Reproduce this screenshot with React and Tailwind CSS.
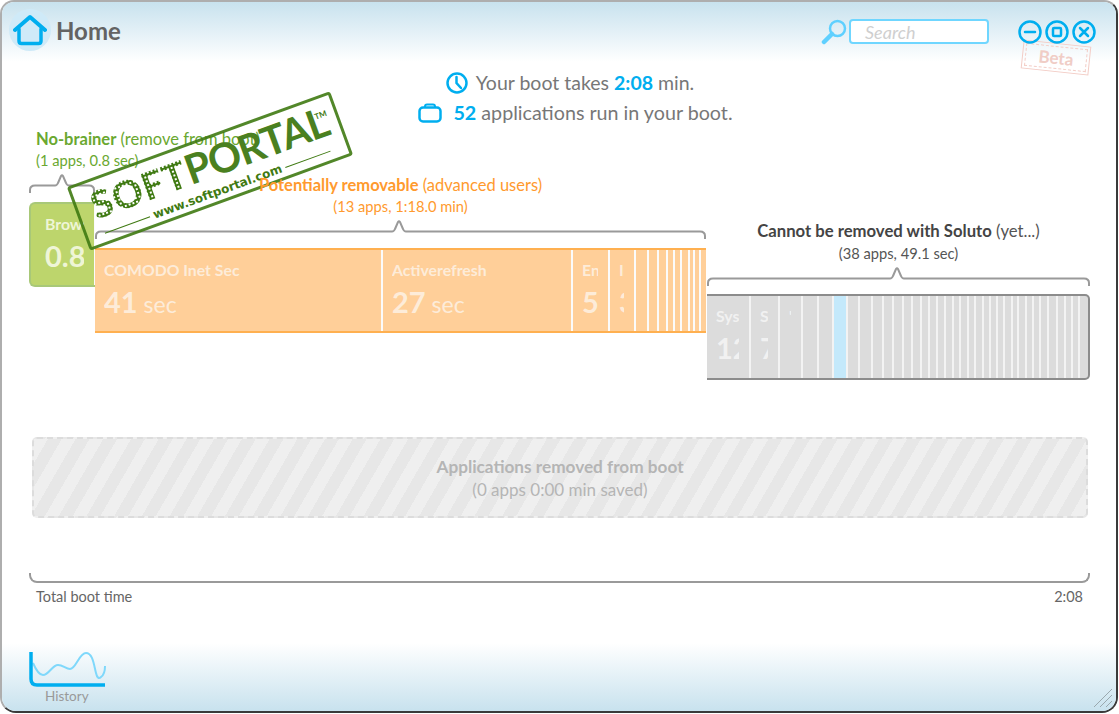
const orange = [
  { w: 288, n: "COMODO Inet Sec", v: "41", u: " sec" },
  { w: 190, n: "Activerefresh", v: "27", u: " sec" },
  { w: 37, n: "EngineX", v: "5", u: " sec" },
  { w: 26, n: "Imp", v: "3", u: " sec" },
  { w: 13 }, { w: 10 }, { w: 9 }, { w: 7 }, { w: 7 }, { w: 8 }, { w: 5 }, { w: 6 }, { w: 5, last: true },
];
const grayWidths = [13, 11, 10, 10, 9, 9, 8, 8, 8, 8, 7, 8, 7, 8, 7, 7, 7, 8, 6, 8, 7, 7, 8, 9, 8, 7, 7];
const gray = [
  { w: 44, n: "System", v: "12", u: " sec" },
  { w: 29, n: "Svc", v: "7", u: " sec" },
  { w: 23, n: "'''" },
  { w: 16 },
  { w: 15 },
  { w: 14, blue: true },
  { w: 12 },
  ...grayWidths.map((w) => ({ w })),
  { w: 8, last: true },
];

function Segment({ s, tone, sep = "border-[#fbfbfb]" }) {
  return (
    <div
      className={`h-full shrink-0 overflow-hidden border-r-2 ${sep} ${s.blue ? "bg-[#c4e9fb]" : ""}`}
      style={{ width: s.w, borderRightWidth: s.last ? 0 : undefined }}
    >
      {s.n && (
        <div className="h-full pl-[9px] pr-[10px] pt-[10px]">
          <div className={`overflow-hidden whitespace-nowrap text-[15.800px] leading-5 font-bold ${tone}`}>{s.n}</div>
          {s.v && (
            <div className={`mt-[5px] overflow-hidden whitespace-nowrap text-[29px] leading-[34px] font-bold ${tone}`}>
              {s.v}
              <span className="text-[23px] font-normal">{s.u}</span>
            </div>
          )}
        </div>
      )}
    </div>
  );
}

function Bracket({ w, ax }) {
  return (
    <svg width={w} height="21" className="block" fill="none" stroke="#9a9a9a" strokeWidth="2">
      <path d={`M1 20 V17 Q1 12.500 6 12.500 H${ax - 7} Q${ax - 5} 12.500 ${ax - 4} 10 L${ax - 1} 3 Q${ax} 1.500 ${ax + 1} 3 L${ax + 4} 10 Q${ax + 5} 12.500 ${ax + 7} 12.500 H${w - 6} Q${w - 1} 12.500 ${w - 1} 17 V20`} />
    </svg>
  );
}

function WinButton({ children }) {
  return (
    <svg width="24" height="24" viewBox="0 0 24 24" fill="none" stroke="#00aeef" strokeWidth="2.500" strokeLinecap="round">
      <circle cx="12" cy="12" r="10.500" />
      {children}
    </svg>
  );
}

function Stamp() {
  return (
    <div className="pointer-events-none absolute left-[70px] top-[137px] z-10 h-[68px] w-[280px] -rotate-[20deg] rounded-[3px] border-[3px] border-[#3f7a12]/90">
      <div className="absolute left-[14px] top-[3px] flex items-baseline">
        <span className="bg-[radial-gradient(circle,#3f7a12_1.700px,transparent_1.800px)] bg-[length:4px_4px] bg-clip-text text-[38px] leading-[40px] font-black tracking-[1px] text-transparent">
          SOFT
        </span>
        <span className="text-[41px] leading-[40px] font-bold tracking-[-1px] text-[#4a8020]">PORTAL</span>
        <span className="absolute left-[240px] top-[8px] text-[8px] leading-[10px] font-bold text-[#3f7a12]">TM</span>
      </div>
      <div className="absolute left-[17px] top-[45px] flex w-[240px] items-center gap-[4px]">
        <div className="h-px flex-1 bg-[#3f7a12]" />
        <span className="whitespace-nowrap font-['DejaVu_Sans','Lato',sans-serif] text-[12px] leading-4 font-bold text-[#3f7a12]">
          www.softportal.com
        </span>
        <div className="h-px flex-1 bg-[#3f7a12]" />
      </div>
    </div>
  );
}

export default function App() {
  return (
    <div className="h-[714px] w-[1119px] overflow-hidden bg-white pb-[1px] pr-[1px] font-['Lato','Open_Sans',sans-serif]">
      <div className="relative flex h-full w-full flex-col overflow-hidden rounded-t-[14px] rounded-b-[16px] border-y-2 border-x-2 border-t-[#aeaeae] border-l-[#aeaeae] border-r-[#3a3a3a] border-b-[#3a3a3a] bg-white">
        <header className="flex h-[60px] shrink-0 items-start bg-gradient-to-b from-[#c8e2ee] to-white">
          <div className="ml-[7px] mt-[7px] flex h-[42px] w-[42px] items-center justify-center rounded-full bg-[#cfeaf8]">
            <svg width="34" height="32" viewBox="0 0 34 32" fill="none" stroke="#00aeef" strokeLinejoin="round" strokeLinecap="round">
              <path d="M2 16 L17 3 L32 16" strokeWidth="4" />
              <path d="M6 15 V27 Q6 29.500 8.500 29.500 H25.500 Q28 29.500 28 27 V15" strokeWidth="3.500" />
            </svg>
          </div>
          <div className="ml-[5px] mt-[12px] text-[24px] leading-[34px] font-bold text-[#636363]">Home</div>
          <div className="ml-auto mt-[17px] flex items-start">
            <svg width="26" height="26" viewBox="0 0 26 26" fill="none" className="mr-[2px]" strokeLinecap="round">
              <circle cx="16.500" cy="9.500" r="7.500" stroke="#5fd0ff" strokeWidth="2.500" />
              <path d="M11 15 L3 23" stroke="#5fd0ff" strokeWidth="4.500" />
            </svg>
            <div className="flex h-[25px] w-[140px] items-center rounded-[4px] border-2 border-[#6fd6ff] bg-white pl-[14px] text-[18px] leading-5 italic text-[#cfcfcf]">
              Search
            </div>
          </div>
          <div className="relative ml-[29px] mr-[20px] mt-[18px] flex gap-[3px]">
            <div className="absolute left-[7px] top-[26px] flex h-[23px] w-[62px] rotate-[6deg] items-center justify-center border border-dashed border-[#f3cdc6] outline outline-1 outline-offset-[2px] outline-[#f3cdc6]">
              <span className="text-[17px] leading-5 font-bold text-[#f0cdc6]">Beta</span>
            </div>
            <div className="relative flex gap-[3px]">
              <WinButton><path d="M7 12 H17" /></WinButton>
              <WinButton><rect x="8" y="8" width="8" height="8" rx="1" /></WinButton>
              <WinButton><path d="M8 8 L16 16 M16 8 L8 16" /></WinButton>
            </div>
          </div>
        </header>

        <section className="mt-[6px] flex shrink-0 flex-col items-center pl-[22px] text-[19.500px] leading-[30px] text-[#777777]">
          <div className="flex items-center">
            <svg width="22" height="22" viewBox="0 0 22 22" fill="none" stroke="#00aeef" strokeWidth="2.500" strokeLinecap="round" className="mr-[8px]">
              <circle cx="11" cy="11" r="9.500" />
              <path d="M10.500 5 V11 L15 16" />
            </svg>
            <span>Your boot takes <b className="font-bold text-[#00aeef]">2:08</b> min.</span>
          </div>
          <div className="ml-[11px] flex items-center text-[19.700px]">
            <svg width="24" height="20" viewBox="0 0 24 20" fill="none" stroke="#00aeef" strokeWidth="2.500" className="mr-[11px]">
              <rect x="1.500" y="4.500" width="21" height="14" rx="3.500" />
              <path d="M7 4.500 V3.500 Q7 1.500 9 1.500 H15 Q17 1.500 17 3.500 V4.500" strokeWidth="2" />
            </svg>
            <span><b className="font-bold text-[#00aeef]">52</b> applications run in your boot.</span>
          </div>
        </section>

        <section className="flex shrink-0 items-start pl-[27px]">
          <div className="relative mt-[1px] w-[66px] shrink-0">
            <div className="ml-[7px] whitespace-nowrap text-[16.500px] leading-5 text-[#6aa830]">
              <b className="font-bold">No-brainer</b> (remove from boot)
            </div>
            <div className="ml-[7px] mt-px whitespace-nowrap text-[14.700px] leading-5 text-[#6aa830]">(1 apps, 0.8 sec)</div>
            <div className="mt-[3px]"><Bracket w={66} ax={33} /></div>
            <div className="mt-[8px] h-[85px] overflow-hidden rounded-l-[6px] border-y-2 border-l-2 border-[#a8c878] bg-[#bdd56c] pl-[5px]">
              <Segment s={{ w: 60, n: "Browser", v: "0.8", u: " sec" }} tone="text-[#eff5d6]" />
            </div>
          </div>

          <div className="mt-[47px] w-[611px] shrink-0">
            <div className="relative z-20 whitespace-nowrap text-center text-[16.500px] leading-5 text-[#ff9a2e]">
              <b className="font-bold">Potentially removable</b> (advanced users)
            </div>
            <div className="relative z-20 mt-px text-center text-[14.700px] leading-5 text-[#ff9a2e]">(13 apps, 1:18.0 min)</div>
            <div className="mt-[3px]"><Bracket w={611} ax={304} /></div>
            <div className="mt-[8px] flex h-[85px] overflow-hidden border-y-2 border-[#ffb050] bg-[#ffcf99]">
              {orange.map((s, i) => <Segment key={i} s={s} tone="text-[#fdecd9]" />)}
            </div>
          </div>

          <div className="ml-px mt-[93px] w-[383px] shrink-0">
            <div className="whitespace-nowrap text-center text-[16.700px] leading-5 text-[#555555]">
              <b className="font-bold text-[#444444]">Cannot be removed with Soluto</b> (yet...)
            </div>
            <div className="mt-[2px] text-center text-[14.700px] leading-5 text-[#555555]">(38 apps, 49.1 sec)</div>
            <div className="mt-[3px]"><Bracket w={383} ax={190} /></div>
            <div className="mt-[7px] flex h-[86px] overflow-hidden rounded-r-[5px] border-y-2 border-r-2 border-[#8c8c8c] bg-[#dcdcdc]">
              {gray.map((s, i) => <Segment key={i} s={s} tone="text-[#f1f1f1]" sep="border-[#f3f3f3]" />)}
            </div>
          </div>
        </section>

        <section className="ml-[30px] mr-[28px] mt-[57px] flex h-[81px] shrink-0 flex-col items-center rounded-[5px] border-2 border-dashed border-[#dcdcdc] bg-[repeating-linear-gradient(120deg,#efefef_0px,#efefef_12px,#e7e7e7_12px,#e7e7e7_24px)] pt-[18px] text-[#b5b5b5]">
          <div className="text-[17.200px] leading-5 font-bold">Applications removed from boot</div>
          <div className="mt-[3px] text-[17px] leading-5">(0 apps 0:00 min saved)</div>
        </section>

        <section className="ml-[27px] mr-[26px] mt-[55px] shrink-0">
          <div className="h-[10px] rounded-b-[8px] border-x-2 border-b-2 border-[#9a9a9a]" />
          <div className="mt-[4px] flex justify-between px-[7px] text-[14.500px] leading-5 text-[#666666]">
            <span>Total boot time</span>
            <span>2:08</span>
          </div>
        </section>

        <footer className="relative mt-auto h-[68px] shrink-0 bg-gradient-to-b from-white to-[#c8e2ee] pl-[27px] pt-[9px]">
          <svg width="78" height="36" viewBox="0 0 78 36" fill="none" className="block">
            <path d="M4 11 C7 18 10 23 14 23 C20 23 23 13 29 13 C34 13 37 17 41 17 C47 17 50 1 57 1 C64 1 65 14 67 21 C68 26 70 27 72 25 C75 23 76 19 76 14" stroke="#7fd8fb" strokeWidth="2" />
            <path d="M2 0 V27 Q2 33 8 33 H76" stroke="#00aeef" strokeWidth="3.500" />
          </svg>
          <div className="ml-[16px] text-[13.500px] leading-4 text-[#999999]">History</div>
          <svg width="22" height="22" viewBox="0 0 22 22" className="absolute bottom-[2px] right-[2px]" stroke="#9aa8ae" strokeWidth="1" fill="none">
            <path d="M2 20 L20 2 M8 20 L20 8 M14 20 L20 14" />
          </svg>
        </footer>
      </div>
      <Stamp />
    </div>
  );
}
